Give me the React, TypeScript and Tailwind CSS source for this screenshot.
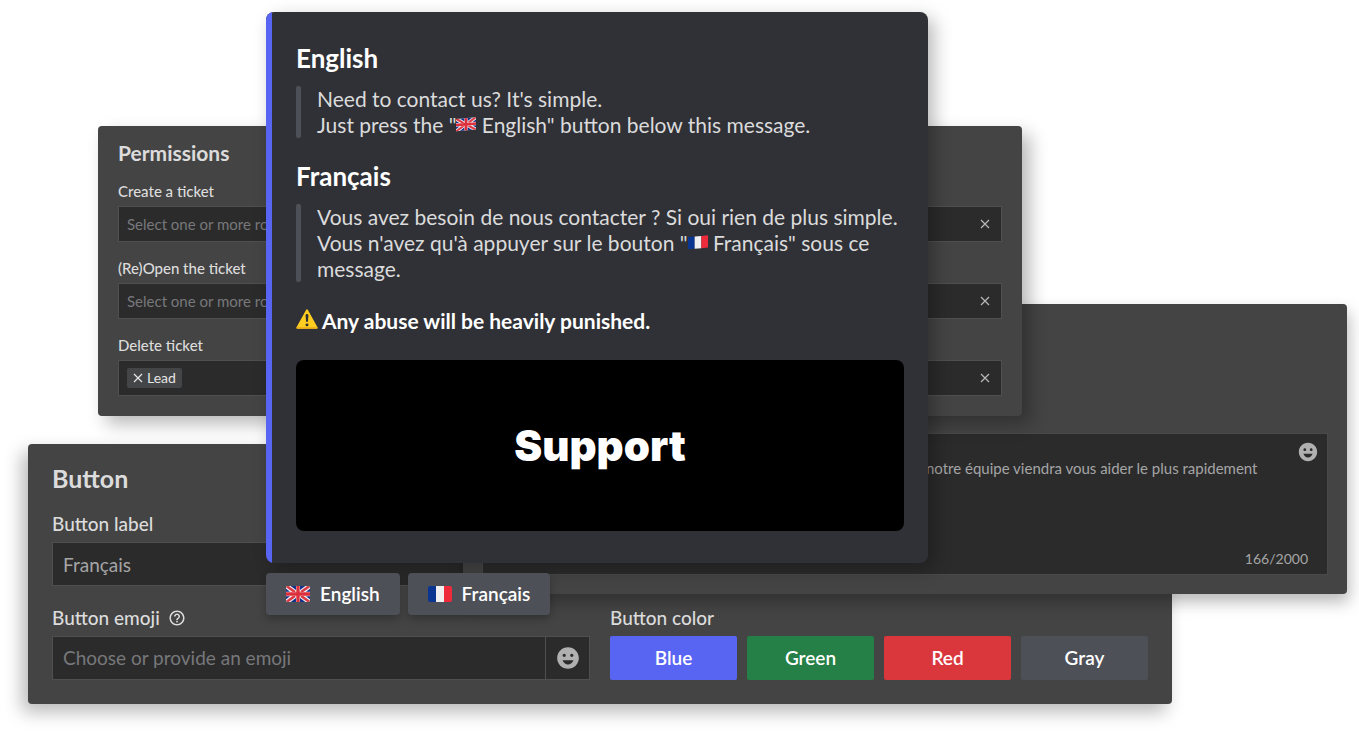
import { MdEmojiEmotions, MdHelpOutline } from "react-icons/md";

function Cross({ className }: { className: string }) {
  return (
    <svg viewBox="0 0 10 10" className={className} fill="none" stroke="currentColor" strokeWidth="1.2" aria-hidden="true">
      <path d="M1 1l8 8M9 1l-8 8" />
    </svg>
  );
}

function UnionJack() {
  return (
    <>
      <rect width="36" height="24" fill="#eeeeee" />
      <path d="M0 0h4l10 7v2H10L0 2zM36 0h-4L22 7v2h4l10-7zM0 24h4l10-7v-2h-4L0 22zM36 24h-4l-10-7v-2h4l10 7z" fill="#dd3a45" />
      <path d="M7 0h8v6zM29 0h-8v6zM0 4l6 4.500H0zM36 4l-6 4.500h6zM7 24h8v-6zM29 24h-8v-6zM0 20l6-4.500H0zM36 20l-6-4.500h6z" fill="#12328b" />
      <path d="M15.500 0h5v9.500H36v5H20.500V24h-5v-9.500H0v-5h15.500z" fill="#dd2f3b" />
    </>
  );
}

function Tricolour() {
  return (
    <>
      <rect width="12" height="24" fill="#0a3590" />
      <rect x="12" width="12" height="24" fill="#f0f0f0" />
      <rect x="24" width="12" height="24" fill="#ee2b3b" />
    </>
  );
}

function Flag({ country }: { country: "gb" | "fr" }) {
  return (
    <svg viewBox="0 0 36 24" className="h-4 w-6 rounded-xs" aria-hidden="true">
      {country === "gb" ? <UnionJack /> : <Tricolour />}
    </svg>
  );
}

function WavingFlag({ country }: { country: "gb" | "fr" }) {
  return (
    <svg viewBox="0 0 36 26" className="mb-1.5 inline-block h-[15px] w-5" aria-hidden="true">
      <g transform="matrix(1 -0.080 0 0.920 0 3)">
        {country === "gb" ? <UnionJack /> : <Tricolour />}
      </g>
    </svg>
  );
}

function RoleField({ id, label, tag }: { id: string; label: string; tag?: string }) {
  return (
    <div className="flex flex-col gap-[5px]">
      <label htmlFor={id} className="text-[15px] leading-5 font-medium text-[#dcdcdc]">
        {label}
      </label>
      <div className="flex h-9 items-center border border-[#4f4f50] bg-[#2b2b2b] px-2">
        {tag && (
          <button type="button" className="flex h-5 items-center gap-1 rounded-xs bg-[#444546] px-1.5 text-sm text-[#e6e6e6]">
            <Cross className="size-2.5" />
            {tag}
          </button>
        )}
        <input
          id={id}
          placeholder={tag ? undefined : "Select one or more roles"}
          className="min-w-0 flex-1 bg-transparent text-[15px] outline-none placeholder:text-[#77787b]"
        />
        <button type="button" aria-label={`Clear ${label}`} className="flex size-4 items-center justify-center text-[#b8b8b8]">
          <Cross className="size-2.5" />
        </button>
      </div>
    </div>
  );
}

function ButtonPanel() {
  return (
    <section className="absolute top-[444px] right-[187px] left-7 rounded bg-[#444444] px-6 pt-5 pb-6 shadow-[-6px_8px_18px_rgba(0,0,0,0.28)]">
      <h2 className="mb-5 text-[25px] leading-7 font-bold text-[#dcdcdc]">Button</h2>
      <div className="grid grid-cols-2 gap-5">
        <div className="flex flex-col gap-1.5">
          <label htmlFor="button-label" className="text-[19px] leading-6 font-medium text-[#dcdcdc]">Button label</label>
          <input
            id="button-label"
            defaultValue="Français"
            className="h-11 border border-[#4f4f50] bg-[#2b2b2b] px-2.5 text-[19px] text-[#a5a5a6] outline-none"
          />
        </div>
        <div className="col-start-1 flex flex-col gap-1.5">
          <div className="flex items-center gap-2 text-[#dcdcdc]">
            <label htmlFor="button-emoji" className="text-[19px] leading-6 font-medium">Button emoji</label>
            <MdHelpOutline className="size-[18px]" aria-hidden="true" />
          </div>
          <div className="flex h-11 border border-[#4f4f50] bg-[#2b2b2b]">
            <input
              id="button-emoji"
              placeholder="Choose or provide an emoji"
              className="min-w-0 flex-1 bg-transparent px-2.5 text-[19px] outline-none placeholder:text-[#77787b]"
            />
            <button type="button" aria-label="Pick an emoji" className="flex w-11 items-center justify-center border-l border-[#4f4f50] text-[#b0b0b0]">
              <MdEmojiEmotions className="size-[26px]" />
            </button>
          </div>
        </div>
        <div className="flex flex-col gap-1.5">
          <h3 className="text-[19px] leading-6 font-medium text-[#dcdcdc]">Button color</h3>
          <div className="grid h-11 grid-cols-4 gap-2.5 text-[19px] font-semibold text-white">
            <button type="button" className="rounded-xs bg-[#5865f2]">Blue</button>
            <button type="button" className="rounded-xs bg-[#248046]">Green</button>
            <button type="button" className="rounded-xs bg-[#da373c]">Red</button>
            <button type="button" className="rounded-xs bg-[#4e5058]">Gray</button>
          </div>
        </div>
      </div>
    </section>
  );
}

function MessagePanel() {
  return (
    <section className="absolute top-[304px] right-3 left-[463px] rounded bg-[#444444] px-[19px] pt-[129px] pb-[19px] shadow-[2px_8px_16px_rgba(0,0,0,0.28)]">
      <div className="relative flex border border-[#494949] bg-[#2b2b2b]">
        <textarea
          aria-label="Message"
          defaultValue="notre équipe viendra vous aider le plus rapidement"
          className="h-[140px] flex-1 resize-none bg-transparent pt-6 pl-[443px] text-[15px] leading-5 text-[#a5a5a6] outline-none"
        />
        <button type="button" aria-label="Insert an emoji" className="absolute top-[7px] right-2 text-[#b0b0b0]">
          <MdEmojiEmotions className="size-[22px]" />
        </button>
        <span className="absolute right-[19px] bottom-[7px] text-sm leading-4 text-[#a5a5a6]">166/2000</span>
      </div>
    </section>
  );
}

function PermissionsPanel() {
  return (
    <section className="absolute top-[126px] right-[337px] left-[98px] rounded bg-[#444444] px-5 pt-[15px] pb-5 shadow-[8px_8px_18px_rgba(0,0,0,0.28)]">
      <h2 className="mb-4 text-[21px] leading-6 font-bold text-[#dcdcdc]">Permissions</h2>
      <div className="flex flex-col gap-4">
        <RoleField id="create-ticket" label="Create a ticket" />
        <RoleField id="open-ticket" label="(Re)Open the ticket" />
        <RoleField id="delete-ticket" label="Delete ticket" tag="Lead" />
      </div>
    </section>
  );
}

function Quote({ children }: { children: React.ReactNode }) {
  return (
    <blockquote className="flex gap-4 text-[21px] leading-[26px] text-[#dbdbdc]">
      <span className="w-[5px] shrink-0 rounded-xs bg-[#4e5058]" />
      <p>{children}</p>
    </blockquote>
  );
}

function SupportMessage() {
  return (
    <div className="absolute top-3 right-[431px] left-[266px]">
      <article className="flex overflow-hidden rounded-lg bg-[#303136] text-white shadow-[6px_6px_18px_rgba(0,0,0,0.28)]">
        <span className="w-1.5 shrink-0 bg-[#5865f2]" />
        <div className="min-w-0 flex-1 px-6 py-8">
          <h2 className="mb-3.5 text-[26px] leading-7 font-bold">English</h2>
          <Quote>
            Need to contact us? It's simple.
            <br />
            Just press the "<WavingFlag country="gb" /> English" button below this message.
          </Quote>
          <h2 className="mt-6 mb-3.5 text-[26px] leading-7 font-bold">Français</h2>
          <Quote>
            Vous avez besoin de nous contacter ? Si oui rien de plus simple.
            <br />
            Vous n'avez qu'à appuyer sur le bouton "<WavingFlag country="fr" /> Français" sous ce{" "}
            <br />
            message.
          </Quote>
          <p className="my-[26px] flex items-center gap-1 text-[21px] leading-[26px] font-bold">
            <svg viewBox="0 0 36 34" className="-mt-1 h-5 w-[22px]" aria-hidden="true">
              <path d="M1.500 33.500a1.500 1.500 0 0 1-1.300-2.300L16.600 1.300a1.600 1.600 0 0 1 2.800 0l16.400 29.900a1.500 1.500 0 0 1-1.300 2.300z" fill="#ffcc20" />
              <path d="M0 31h36v1a1.500 1.500 0 0 1-1.500 1.500h-33A1.500 1.500 0 0 1 0 32z" fill="#e8ab16" />
              <path d="M15.600 11a2.400 2.400 0 0 1 4.800 0l-.8 10.500h-3.200z" fill="#2a2f33" />
              <circle cx="18" cy="27" r="2.500" fill="#2a2f33" />
            </svg>
            Any abuse will be heavily punished.
          </p>
          <div className="flex h-[171px] items-center justify-center rounded-lg bg-black font-[Inter,sans-serif] text-[42px] font-black">
            Support
          </div>
        </div>
      </article>
      <div className="mt-2.5 flex gap-2 text-[19px] font-semibold text-white">
        <button type="button" className="flex h-[42px] items-center gap-2.5 rounded bg-[#4e5058] px-5 shadow-[0_4px_8px_rgba(0,0,0,0.25)]">
          <Flag country="gb" />
          English
        </button>
        <button type="button" className="flex h-[42px] items-center gap-2.5 rounded bg-[#4e5058] px-5 shadow-[0_4px_8px_rgba(0,0,0,0.25)]">
          <Flag country="fr" />
          Français
        </button>
      </div>
    </div>
  );
}

export default function App() {
  return (
    <main className="relative min-h-screen w-full overflow-hidden bg-white font-[Lato,sans-serif]">
      <ButtonPanel />
      <MessagePanel />
      <PermissionsPanel />
      <SupportMessage />
    </main>
  );
}
